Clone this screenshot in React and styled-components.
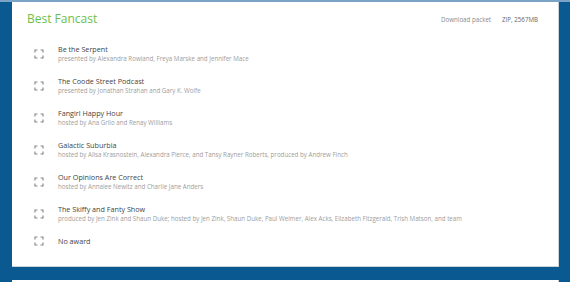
import React from "react";
import styled, { createGlobalStyle } from "styled-components";

const GlobalStyle = createGlobalStyle`
  body {
    margin: 0;
    background: #0a5a91;
    font-family: "Open Sans", "Liberation Sans", sans-serif;
  }
`;

const Page = styled.div`
  border-top: 2px solid #7aa3c6;
  padding: 0 11px 0 12px;
  display: flex;
  flex-direction: column;
  gap: 13px;
`;

const Card = styled.section`
  background: #fff;
  border-right: 1px solid #c9d3db;
  border-bottom: 1px solid #c9d3db;
  padding: 6px 20px 20px 15px;
`;

const Header = styled.header`
  display: flex;
  align-items: center;
  justify-content: space-between;
  height: 20px;
`;

const Title = styled.h2`
  margin: 0;
  font-size: 12px;
  font-weight: 400;
  color: #6cbf4b;
`;

const Download = styled.div`
  display: flex;
  gap: 11px;
  font-size: 6.2px;
  color: #8a8a8a;
  padding-top: 2px;

  span:last-child {
    color: #666;
  }
`;

const List = styled.ul`
  list-style: none;
  margin: 16px 0 0;
  padding: 0;
  display: flex;
  flex-direction: column;
  gap: 12px;
`;

const Item = styled.li`
  display: flex;
  align-items: center;
  gap: 14px;
  padding-left: 7px;
`;

const Texts = styled.div`
  display: flex;
  flex-direction: column;
`;

const Name = styled.div`
  font-size: 7.2px;
  line-height: 10px;
  color: #444;
`;

const Credit = styled.div`
  font-size: 6.2px;
  line-height: 10px;
  color: #9d9d9d;
`;

const Corners = () => (
  <svg width="10" height="10" viewBox="0 0 10 10" fill="none" stroke="#8a8a8a" strokeWidth="1.2">
    <path d="M1 3.5V1H3.5M6.5 1H9V3.5M9 6.5V9H6.5M3.5 9H1V6.5" />
  </svg>
);

const nominees = [
  ["Be the Serpent", "presented by Alexandra Rowland, Freya Marske and Jennifer Mace"],
  ["The Coode Street Podcast", "presented by Jonathan Strahan and Gary K. Wolfe"],
  ["Fangirl Happy Hour", "hosted by Ana Grilo and Renay Williams"],
  ["Galactic Suburbia", "hosted by Alisa Krasnostein, Alexandra Pierce, and Tansy Rayner Roberts, produced by Andrew Finch"],
  ["Our Opinions Are Correct", "hosted by Annalee Newitz and Charlie Jane Anders"],
  ["The Skiffy and Fanty Show", "produced by Jen Zink and Shaun Duke; hosted by Jen Zink, Shaun Duke, Paul Weimer, Alex Acks, Elizabeth Fitzgerald, Trish Matson, and team"],
  ["No award", null],
];

export default function App() {
  return (
    <>
      <GlobalStyle />
      <Page>
        <Card>
          <Header>
            <Title>Best Fancast</Title>
            <Download>
              <span>Download packet</span>
              <span>ZIP, 2567MB</span>
            </Download>
          </Header>
          <List>
            {nominees.map(([name, credit]) => (
              <Item key={name}>
                <Corners />
                <Texts>
                  <Name>{name}</Name>
                  {credit && <Credit>{credit}</Credit>}
                </Texts>
              </Item>
            ))}
          </List>
        </Card>
        <Card />
      </Page>
    </>
  );
}
